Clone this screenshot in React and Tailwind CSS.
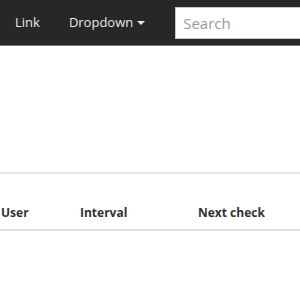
export default function App() {
    return (
        <div className="w-[300px] h-[300px] overflow-hidden bg-white" style={{ fontFamily: '"Open Sans", sans-serif' }}>
            {/* Navbar */}
            <nav className="flex items-center h-[46px] bg-[#272727] border-b border-[#7a7a7a] whitespace-nowrap">
                <a className="pl-[15px] pr-[14px] text-[13px] text-[#e6e6e6]">Link</a>
                <a className="px-[15px] text-[13px] text-[#e6e6e6] flex items-center">
                    Dropdown
                    <span className="ml-[4px] w-0 h-0 border-l-[4px] border-r-[4px] border-t-[4px] border-l-transparent border-r-transparent border-t-[#e6e6e6]" />
                </a>
                <div className="ml-[15px] shrink-0">
                    <input
                        className="w-[200px] h-[32px] bg-white border border-[#c8c8c8] px-[7px] text-[15px] text-[#555] placeholder:text-[#9a9a9a] outline-none"
                        placeholder="Search"
                    />
                </div>
            </nav>

            {/* Content */}
            <div className="h-[126px]" />
            <div className="h-[2px] bg-[#e8e8e8]" />
            <div className="h-[30px]" />
            <div className="grid grid-cols-[79px_118px_1fr] pl-[1px] pb-[7px] border-b-2 border-[#dedede] text-[12px] font-bold text-[#333]">
                <span>User</span>
                <span>Interval</span>
                <span>Next check</span>
            </div>
        </div>
    );
}
